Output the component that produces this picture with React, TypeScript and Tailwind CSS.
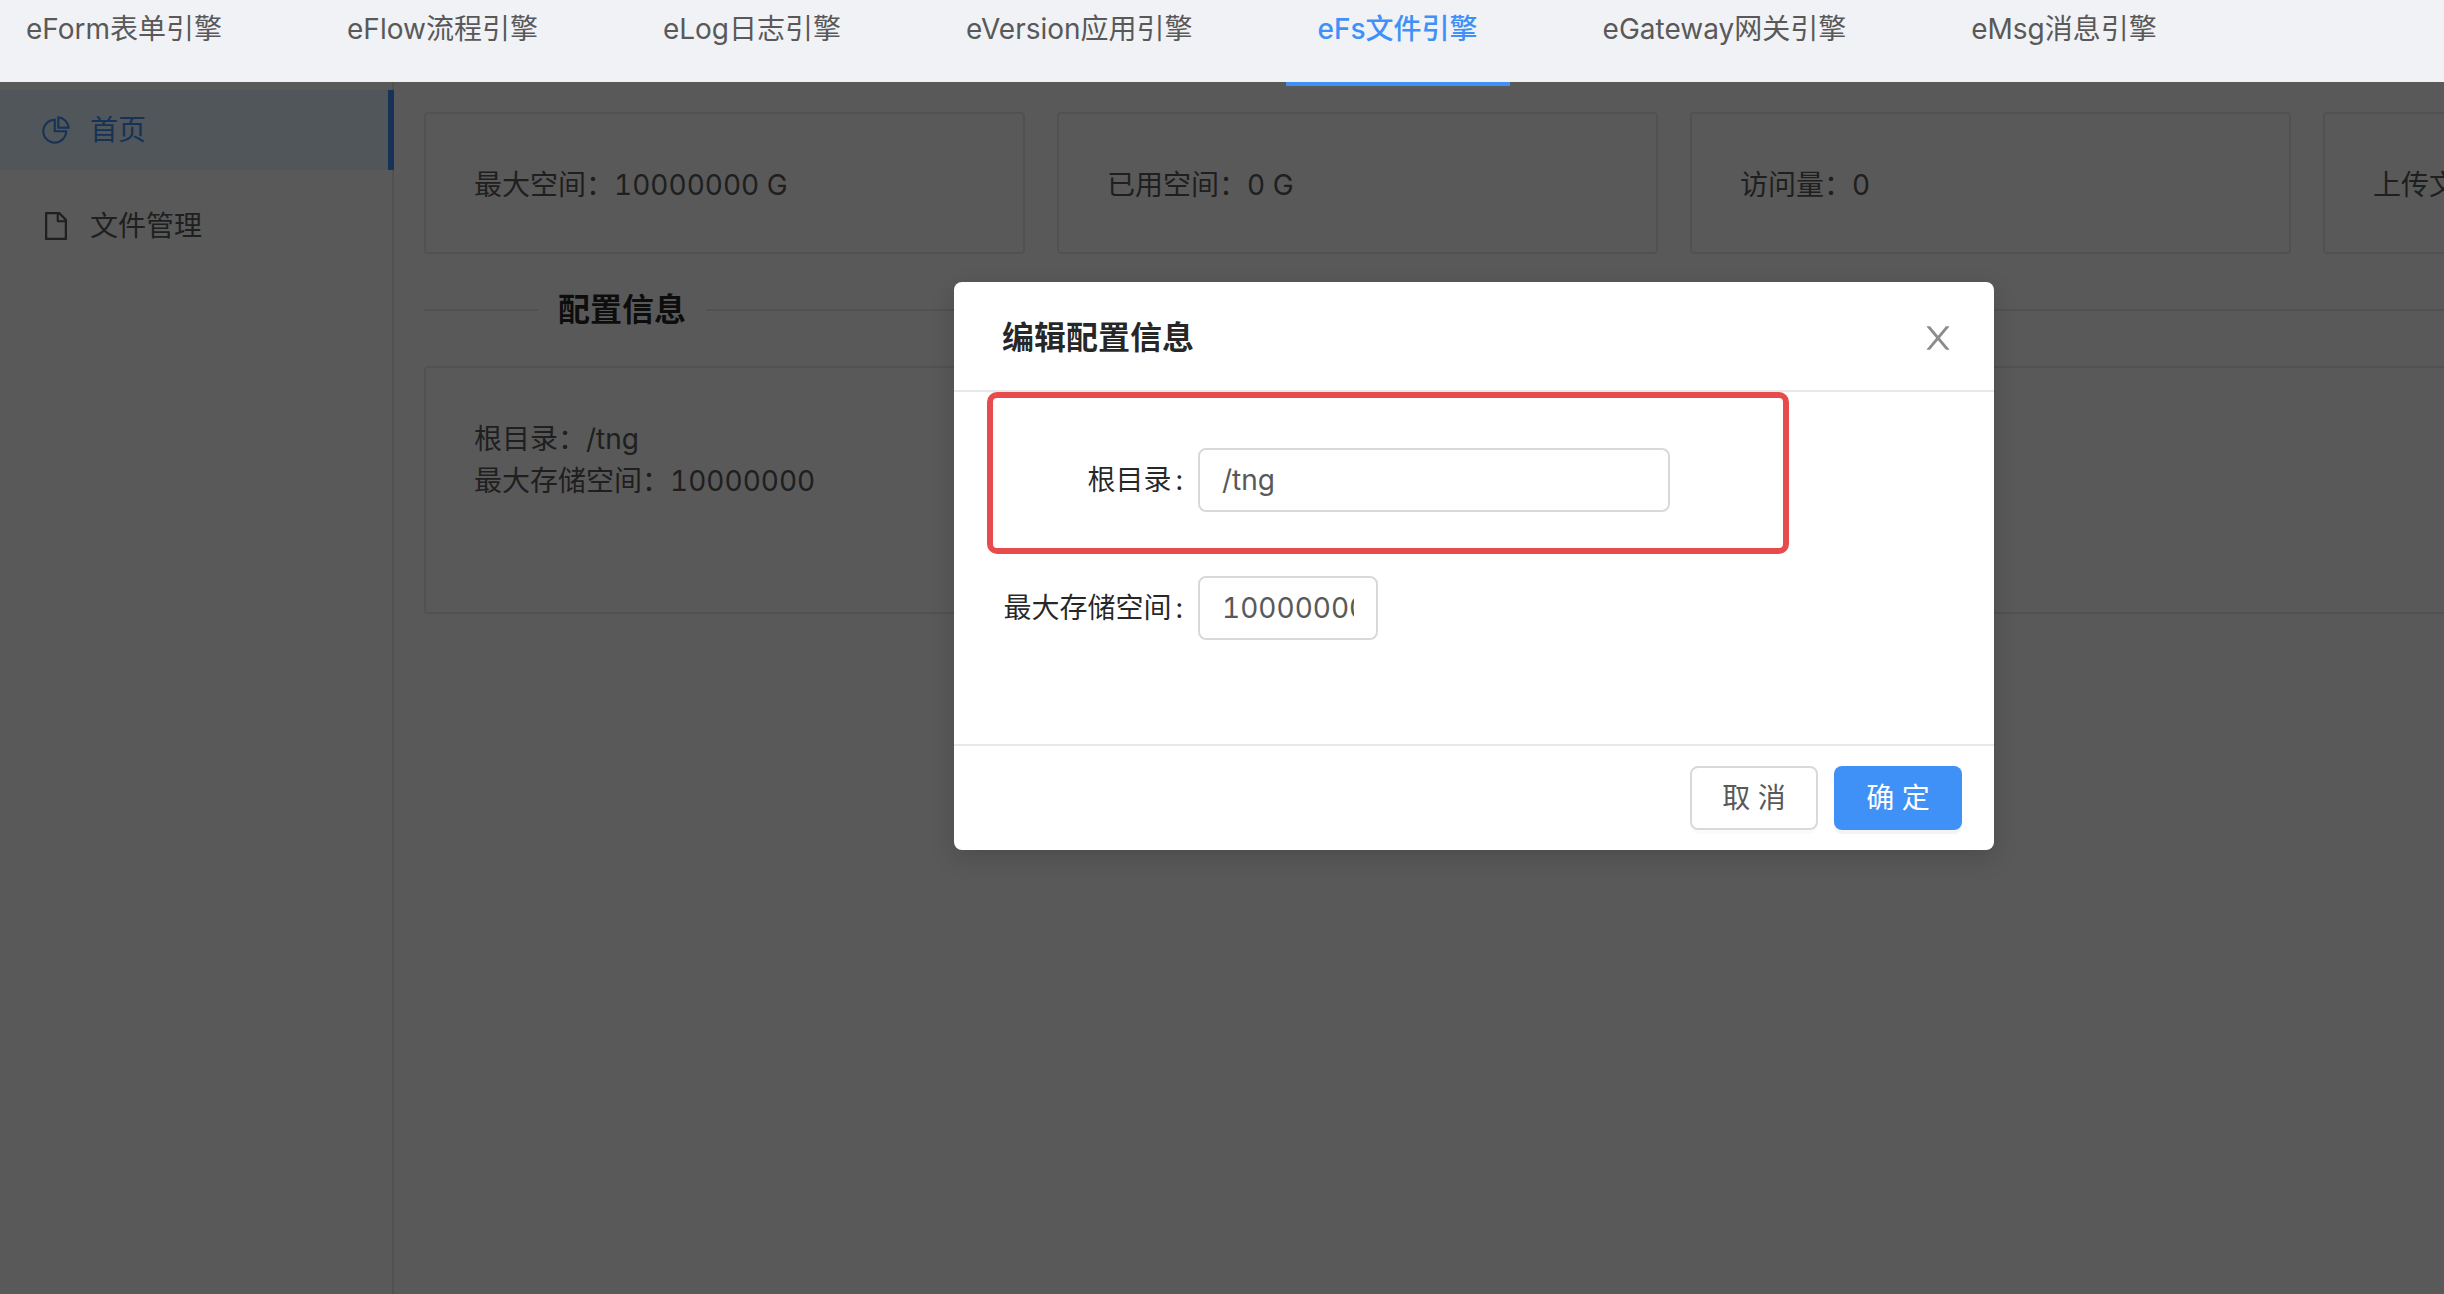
import React from "react";

const tabs = [
    "eForm表单引擎",
    "eFlow流程引擎",
    "eLog日志引擎",
    "eVersion应用引擎",
    "eFs文件引擎",
    "eGateway网关引擎",
    "eMsg消息引擎",
];
const activeTab = "eFs文件引擎";

const stats = ["最大空间：10000000 G", "已用空间：0 G", "访问量：0", "上传文件数：0"];

const PieIcon: React.FC = () => (
    <svg className="size-7" viewBox="64 64 896 896" fill="currentColor" aria-hidden="true">
        <path d="M864 518H506V160c0-4.4-3.6-8-8-8h-26a398.46 398.46 0 0 0-282.8 117.1 398.19 398.19 0 0 0-85.7 127.1A397.61 397.61 0 0 0 72 552a398.46 398.46 0 0 0 117.1 282.8c36.7 36.7 79.5 65.6 127.1 85.7A397.61 397.61 0 0 0 472 952a398.46 398.46 0 0 0 282.8-117.1c36.7-36.7 65.6-79.5 85.7-127.1A397.61 397.61 0 0 0 872 552v-26c0-4.4-3.6-8-8-8zM705.7 787.8A331.59 331.59 0 0 1 470.4 884c-88.1-.4-170.9-34.9-233.2-97.2C174.5 724.1 140 640.7 140 552c0-88.7 34.5-172.1 97.2-234.8 54.6-54.6 124.9-87.9 200.8-95.500V586h364.300c-7.700 76.300-41.300 147-96.600 201.800zM952 462.400l-2.600-28.200c-8.500-92.100-49.400-179-115.200-244.600A399.400 399.400 0 0 0 589 74.600L560.700 72c-4.700-.4-8.700 3.200-8.700 7.900V464c0 4.400 3.600 8 8 8l384-1c4.700 0 8.400-4 8-8.600zm-332.200-58.200V147.600a332.240 332.240 0 0 1 166.400 89.800c45.700 45.600 77 103.600 90 166.100l-256.400.7z" />
    </svg>
);

const FileIcon: React.FC = () => (
    <svg className="size-7" viewBox="64 64 896 896" fill="currentColor" aria-hidden="true">
        <path d="M854.6 288.6L639.4 73.4c-6-6-14.1-9.4-22.6-9.4H192c-17.7 0-32 14.3-32 32v832c0 17.7 14.3 32 32 32h640c17.7 0 32-14.3 32-32V311.3c0-8.5-3.4-16.7-9.4-22.7zM790.2 326H602V137.8L790.2 326zm1.8 562H232V136h302v216a42 42 0 0 0 42 42h216v494z" />
    </svg>
);

const CloseIcon: React.FC = () => (
    <svg className="size-8" viewBox="64 64 896 896" fill="currentColor" aria-hidden="true">
        <path d="M563.8 512l262.5-312.9c4.4-5.2.7-13.1-6.1-13.1h-79.8c-4.7 0-9.2 2.1-12.3 5.7L511.6 449.8 295.1 191.7c-3-3.6-7.5-5.7-12.3-5.7H203c-6.8 0-10.5 7.9-6.1 13.1L459.4 512 196.9 824.9A7.95 7.95 0 0 0 203 838h79.8c4.7 0 9.2-2.1 12.3-5.7l216.5-258.1 216.5 258.1c3 3.6 7.5 5.7 12.3 5.7h79.8c6.8 0 10.5-7.9 6.1-13.1L563.8 512z" />
    </svg>
);

const Header: React.FC = () => (
    <header className="relative z-20 h-[82px] bg-[#f0f2f6]">
        <nav className="-ml-1.5 flex h-[86px] gap-[61px]">
            {tabs.map((tab) => (
                <a
                    key={tab}
                    href="#"
                    className={
                        tab === activeTab
                            ? "shrink-0 whitespace-nowrap border-b-4 border-[#4091f7] px-8 pt-2 font-medium text-[#4091f7]"
                            : "shrink-0 whitespace-nowrap px-8 pt-2"
                    }
                >
                    {tab}
                </a>
            ))}
        </nav>
    </header>
);

const Sidebar: React.FC = () => (
    <aside className="w-[394px] shrink-0 border-r-2 border-[#e8e8e8]">
        <nav className="-mr-0.5 flex flex-col gap-4 pt-2">
            <a href="#" className="flex h-20 items-center gap-5 border-r-6 border-[#4091f7] bg-[#e6f7ff] pl-[42px] text-[#4091f7]">
                <PieIcon />
                首页
            </a>
            <a href="#" className="flex h-20 items-center gap-5 pl-[42px]">
                <FileIcon />
                文件管理
            </a>
        </nav>
    </aside>
);

const Content: React.FC = () => (
    <main className="min-w-0 flex-1 overflow-hidden pl-[30px] pt-[30px]">
        <div className="flex gap-8">
            {stats.map((s) => (
                <div key={s} className="w-[601px] shrink-0 rounded-sm border-2 border-[#e8e8e8] px-12 pt-[50px] pb-[46px]">
                    {s}
                </div>
            ))}
        </div>
        <div className="mt-8 flex items-center gap-5">
            <span className="h-0.5 w-[114px] bg-[#e8e8e8]"></span>
            <h2 className="text-[32px] leading-[48px] font-semibold text-black/85">配置信息</h2>
            <span className="h-0.5 flex-1 bg-[#e8e8e8]"></span>
        </div>
        <div className="mt-8 -mr-1 h-[248px] rounded-sm border-2 border-[#e8e8e8] px-12 pt-[50px]">
            <p>根目录：/tng</p>
            <p>最大存储空间：10000000</p>
        </div>
    </main>
);

const inputStyle = "h-16 rounded-lg border-2 border-[#d9d9d9] bg-white px-[22px] text-[#595959] outline-none";

const EditModal: React.FC = () => (
    <div
        role="dialog"
        aria-labelledby="modal-title"
        className="absolute top-[200px] left-[calc(50%-268px)] w-[1040px] rounded-lg bg-white shadow-[0_8px_24px_rgba(0,0,0,0.15)]"
    >
        <div className="flex items-center justify-between border-b-2 border-[#e8e8e8] px-12 pt-[34px] pb-[30px]">
            <h3 id="modal-title" className="text-[32px] leading-[44px] font-semibold text-black/85">编辑配置信息</h3>
            <button type="button" aria-label="关闭" className="-mr-2 text-[#8c8c8c]">
                <CloseIcon />
            </button>
        </div>
        <form className="relative flex flex-col gap-16 pt-14 pb-[104px]">
            <div className="flex items-center">
                <label htmlFor="root" className="w-[244px] pr-[15px] text-right text-black/85">
                    根目录<span className="ml-1">:</span>
                </label>
                <input id="root" type="text" defaultValue="/tng" className={`w-[472px] ${inputStyle}`} />
            </div>
            <div className="flex items-center">
                <label htmlFor="max" className="w-[244px] pr-[15px] text-right text-black/85">
                    最大存储空间<span className="ml-1">:</span>
                </label>
                <input id="max" type="text" inputMode="numeric" defaultValue="10000000" className={`w-[180px] ${inputStyle}`} />
            </div>
            {/* highlight around the root directory field */}
            <div className="pointer-events-none absolute top-0 left-[33px] h-[162px] w-[802px] rounded-[10px] border-6 border-[#e84b4c]"></div>
        </form>
        <div className="flex justify-end gap-4 border-t-2 border-[#e8e8e8] px-8 py-5">
            <button type="button" className="h-16 w-32 rounded-lg border-2 border-[#d9d9d9] bg-white shadow-[0_4px_0_rgba(0,0,0,0.015)]">
                取 消
            </button>
            <button type="button" className="h-16 w-32 rounded-lg bg-[#4091f7] text-white shadow-[0_4px_0_rgba(0,0,0,0.045)]">
                确 定
            </button>
        </div>
    </div>
);

const App: React.FC = () => {
    return (
        <div className="flex min-h-screen flex-col overflow-hidden bg-white font-['Inter','Noto_Sans_CJK_SC',sans-serif] text-[28px] leading-[42px] text-[#595959] tabular-nums">
            <Header />
            <div className="relative flex flex-1">
                <Sidebar />
                <Content />
                <div className="absolute inset-0 bg-black/65"></div>
                <EditModal />
            </div>
        </div>
    );
};
export default App;
